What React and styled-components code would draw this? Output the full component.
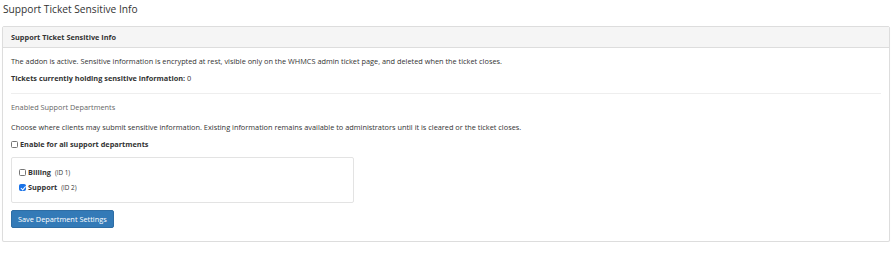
import React from "react";
import { useState } from "react";
import styled, { createGlobalStyle } from "styled-components";

const GlobalStyle = createGlobalStyle`
  body {
    margin: 0;
    background: #fff;
    font-family: "Open Sans", "Liberation Sans", sans-serif;
    color: #333;
  }
`;

const Page = styled.div`
  padding: 0 2px;
`;

const PageTitle = styled.h1`
  margin: 0;
  padding: 2px 0 0 1px;
  height: 24px;
  font-size: 10.2px;
  font-weight: 400;
  line-height: 14px;
  color: #333;
`;

const Panel = styled.div`
  border: 1px solid #ddd;
  border-radius: 2px;
  background: #fff;
  box-shadow: 0 1px 1px rgba(0, 0, 0, 0.05);
`;

const PanelHeading = styled.div`
  background: #f5f5f5;
  border-bottom: 1px solid #ddd;
  padding: 0 8px;
  height: 20px;
  display: flex;
  align-items: center;
  font-size: 7.35px;
  font-weight: 700;
  color: #333;
`;

const PanelBody = styled.div`
  padding: 8px 8px 13px;
  font-size: 7.35px;
  line-height: 11px;
`;

const Text = styled.p`
  margin: 0 0 ${({ $gap }) => $gap ?? 6}px;
`;

const Divider = styled.hr`
  border: 0;
  border-top: 1px solid #eee;
  margin: 9px 0 8px;
`;

const SectionTitle = styled.div`
  color: #666;
  margin-bottom: 9px;
`;

const CheckRow = styled.label`
  display: flex;
  align-items: center;
  gap: 2px;
  font-weight: 700;
`;

const Check = styled.input`
  appearance: none;
  position: relative;
  margin: 0;
  width: 7px;
  height: 7px;
  border: 1px solid #767676;
  border-radius: 1.5px;
  background: #fff;
  box-sizing: border-box;

  &:checked {
    background: #1a73e8;
    border-color: #1a73e8;
  }

  &:checked::after {
    content: "";
    position: absolute;
    left: 1.5px;
    top: 0;
    width: 1.5px;
    height: 3.5px;
    border: solid #fff;
    border-width: 0 1px 1px 0;
    transform: rotate(40deg);
  }
`;

const Small = styled.small`
  font-size: 6.3px;
  font-weight: 400;
  margin-left: 2px;
`;

const DeptBox = styled.div`
  width: 327px;
  border: 1px solid #e3e3e3;
  border-radius: 2px;
  padding: 9px 7px 9px;
  margin: 7px 0 7px;
  display: flex;
  flex-direction: column;
  gap: 4px;
`;

const Button = styled.button`
  display: block;
  font-family: inherit;
  font-size: 7.35px;
  color: #fff;
  background: #337ab7;
  border: 1px solid #2e6da4;
  border-radius: 2px;
  padding: 0 6px;
  height: 18px;
`;

const App = () => {
  const [depts, setDepts] = useState({ billing: false, support: true });
  const [all, setAll] = useState(false);

  return (
    <Page>
      <GlobalStyle />
      <PageTitle>Support Ticket Sensitive Info</PageTitle>
      <Panel>
        <PanelHeading>Support Ticket Sensitive Info</PanelHeading>
        <PanelBody>
          <Text>
            The addon is active. Sensitive information is encrypted at rest,
            visible only on the WHMCS admin ticket page, and deleted when the
            ticket closes.
          </Text>
          <Text $gap={0}>
            <b>Tickets currently holding sensitive information:</b> 0
          </Text>
          <Divider />
          <SectionTitle>Enabled Support Departments</SectionTitle>
          <Text>
            Choose where clients may submit sensitive information. Existing
            information remains available to administrators until it is cleared
            or the ticket closes.
          </Text>
          <CheckRow>
            <Check
              type="checkbox"
              checked={all}
              onChange={(e) => setAll(e.target.checked)}
            />
            Enable for all support departments
          </CheckRow>
          <DeptBox>
            <CheckRow>
              <Check
                type="checkbox"
                checked={depts.billing}
                onChange={(e) => setDepts({ ...depts, billing: e.target.checked })}
              />
              Billing<Small>(ID 1)</Small>
            </CheckRow>
            <CheckRow>
              <Check
                type="checkbox"
                checked={depts.support}
                onChange={(e) => setDepts({ ...depts, support: e.target.checked })}
              />
              Support<Small>(ID 2)</Small>
            </CheckRow>
          </DeptBox>
          <Button>Save Department Settings</Button>
        </PanelBody>
      </Panel>
    </Page>
  );
};

export default App;
